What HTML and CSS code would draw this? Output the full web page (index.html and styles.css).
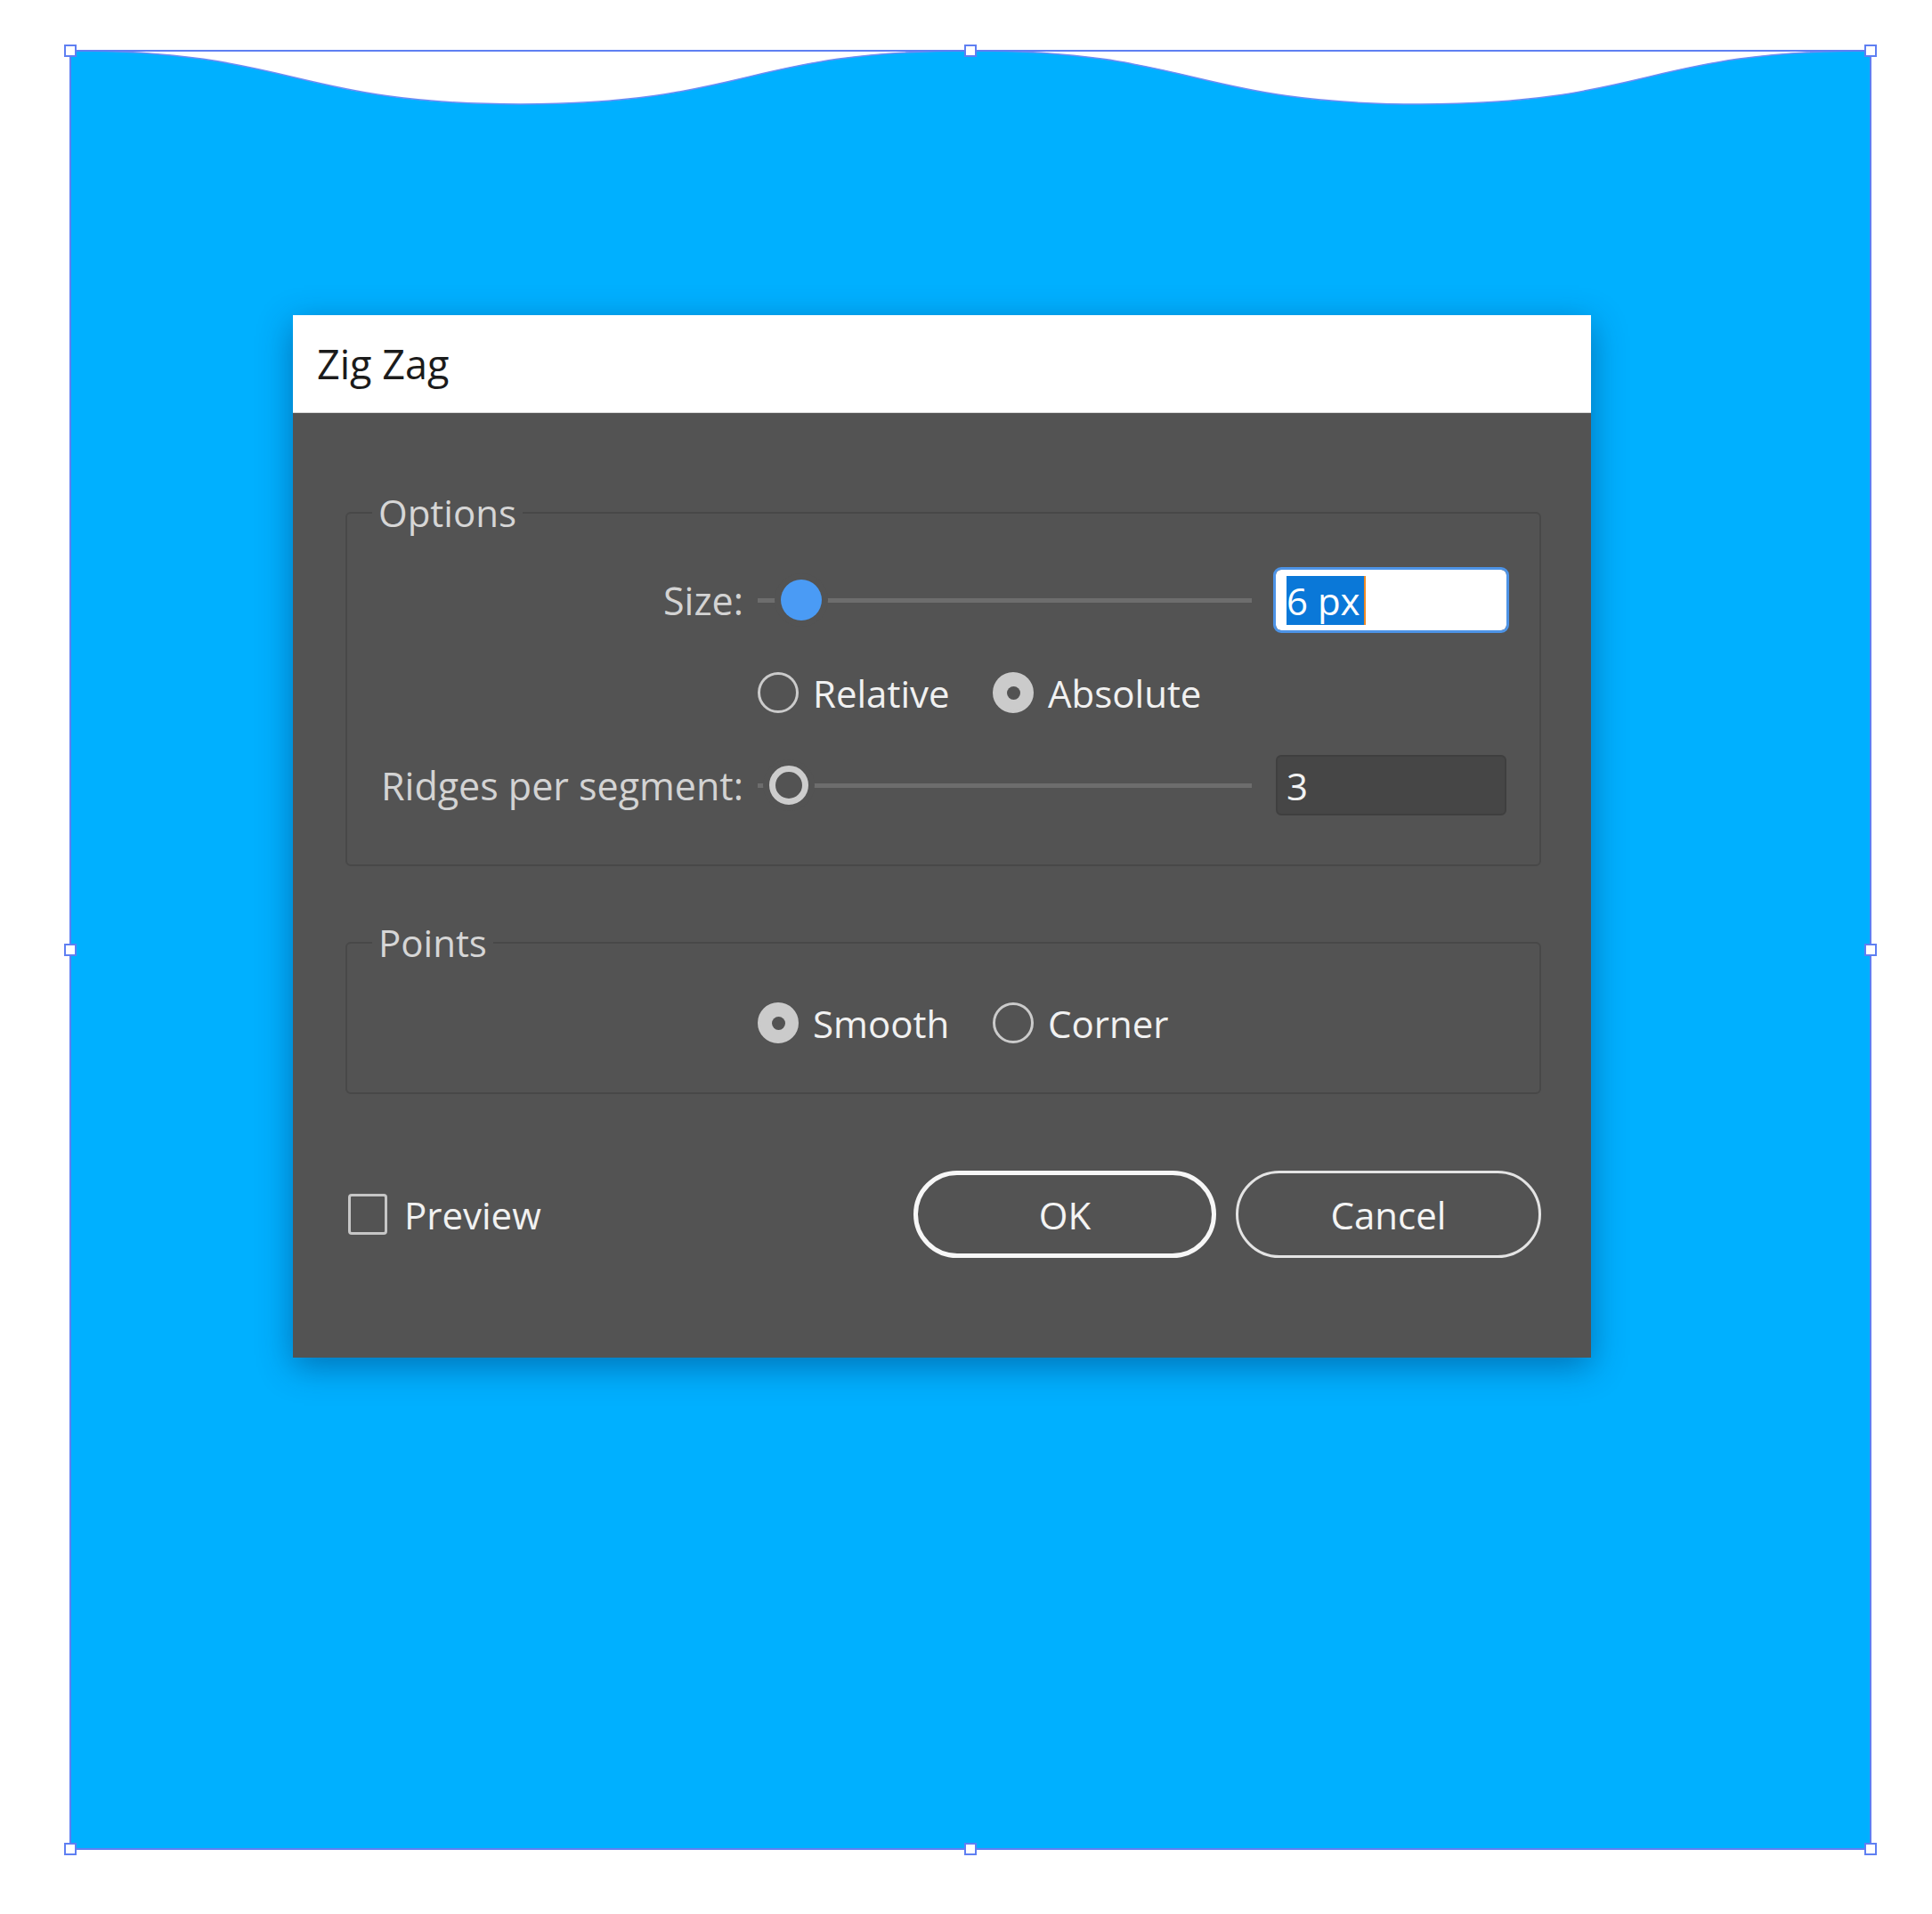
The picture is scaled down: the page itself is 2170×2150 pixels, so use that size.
FILE: index.html
```html
<!DOCTYPE html>
<html lang="en">
<head>
<meta charset="utf-8">
<title>Zig Zag</title>
<link rel="stylesheet" href="styles.css">
</head>
<body>
<div class="stage">
  <svg class="art" width="2170" height="2150" viewBox="0 0 2170 2150" xmlns="http://www.w3.org/2000/svg">
    <path class="shape" d="M79 57 C331 57 331 117 584.5 117 C838 117 838 57 1090 57 C1342 57 1342 117 1595.5 117 C1849 117 1849 57 2101 57 L2101 2077 L79 2077 Z"/>
    <rect class="bbox" x="79" y="57" width="2022" height="2020"/>
    <rect class="handle" x="73" y="51" width="12" height="12"/>
    <rect class="handle" x="1084" y="51" width="12" height="12"/>
    <rect class="handle" x="2095" y="51" width="12" height="12"/>
    <rect class="handle" x="73" y="1061" width="12" height="12"/>
    <rect class="handle" x="2095" y="1061" width="12" height="12"/>
    <rect class="handle" x="73" y="2071" width="12" height="12"/>
    <rect class="handle" x="1084" y="2071" width="12" height="12"/>
    <rect class="handle" x="2095" y="2071" width="12" height="12"/>
  </svg>

  <section class="dialog">
    <header class="titlebar">Zig Zag</header>
    <div class="dialog-body">
      <fieldset class="group group-options">
        <legend class="group-title">Options</legend>
        <div class="row row-first">
          <label class="row-label">Size:</label>
          <div class="slider"><span class="thumb thumb-active thumb-size"></span></div>
          <div class="field field-focus"><span class="selection">6 px</span></div>
        </div>
        <div class="row">
          <span class="row-label"></span>
          <div class="radios">
            <span class="radio"><span class="radio-dot"></span><span class="radio-text">Relative</span></span>
            <span class="radio"><span class="radio-dot is-checked"></span><span class="radio-text">Absolute</span></span>
          </div>
        </div>
        <div class="row">
          <label class="row-label">Ridges per segment:</label>
          <div class="slider"><span class="thumb thumb-ring thumb-ridges"></span></div>
          <div class="field field-dark"><span class="value">3</span></div>
        </div>
      </fieldset>

      <fieldset class="group group-points">
        <legend class="group-title">Points</legend>
        <div class="row row-points">
          <span class="row-label"></span>
          <div class="radios">
            <span class="radio"><span class="radio-dot is-checked"></span><span class="radio-text">Smooth</span></span>
            <span class="radio"><span class="radio-dot"></span><span class="radio-text">Corner</span></span>
          </div>
        </div>
      </fieldset>

      <div class="footer">
        <label class="check"><span class="check-box"></span><span class="check-text">Preview</span></label>
        <div class="buttons">
          <button class="btn btn-primary" type="button">OK</button>
          <button class="btn" type="button">Cancel</button>
        </div>
      </div>
    </div>
  </section>
</div>
</body>
</html>
```
FILE: styles.css
```css
* { box-sizing: border-box; }

html, body {
  margin: 0;
  padding: 0;
  background: #ffffff;
}

body {
  font-family: "Open Sans", "Noto Sans", "Liberation Sans", sans-serif;
}

.stage {
  position: relative;
  width: 2170px;
  height: 2150px;
  overflow: hidden;
}

.art {
  display: block;
}

.shape {
  fill: #00b0ff;
  stroke: #6d8cf4;
  stroke-width: 1.5;
}

.bbox {
  fill: none;
  stroke: #5f7ff2;
  stroke-width: 2;
}

.handle {
  fill: #ffffff;
  stroke: #5f7ff2;
  stroke-width: 2;
}

/* dialog */
.dialog {
  position: absolute;
  left: 329px;
  top: 354px;
  width: 1458px;
  height: 1171px;
  background: #535353;
  box-shadow: 0 10px 36px rgba(0, 40, 90, 0.45);
  display: flex;
  flex-direction: column;
}

.titlebar {
  height: 110px;
  flex: none;
  background: #ffffff;
  color: #1b1b1b;
  font-size: 45px;
  display: flex;
  align-items: center;
  padding-left: 27px;
  border-bottom: 1px solid #d8d8d8;
}

.dialog-body {
  flex: 1;
  padding: 86px 56px 0 59px;
  font-size: 42px;
}

.group {
  margin: 0;
  padding: 0 0 53px 0;
  min-width: 0;
  border: 2px solid #484848;
  border-radius: 6px;
}

.group-points {
  margin-top: 60px;
  padding-bottom: 42px;
}

.group-title {
  margin-left: 28px;
  padding: 0 7px;
  font-size: 42px;
  line-height: 52px;
  color: #d6d6d6;
}

.row {
  display: grid;
  grid-template-columns: 461px 582px 259px;
  align-items: center;
  height: 72px;
  margin-top: 32px;
}

.row-first {
  margin-top: 36px;
}

.row-points {
  margin-top: 28px;
}

.row-label {
  text-align: right;
  padding-right: 16px;
  color: #d3d3d3;
  font-size: 43px;
  white-space: nowrap;
}

/* slider */
.slider {
  position: relative;
  width: 555px;
  height: 48px;
}

.slider::before {
  content: "";
  position: absolute;
  left: 0;
  right: 0;
  top: 22px;
  height: 5px;
  background: #6d6d6d;
}

.thumb {
  position: absolute;
  top: 50%;
  transform: translateY(-50%);
  border-radius: 50%;
  box-shadow: 0 0 0 7px #535353;
}

.thumb-active {
  width: 46px;
  height: 46px;
  background: #4a9bf5;
}

.thumb-size { left: 26px; }

.thumb-ring {
  width: 44px;
  height: 44px;
  background: #535353;
  border: 7px solid #cdcdcd;
}

.thumb-ridges { left: 13px; }

/* fields */
.field {
  width: 259px;
  height: 68px;
  border-radius: 6px;
  display: flex;
  align-items: center;
}

.field-focus {
  background: #ffffff;
  outline: 3px solid #4d93e6;
  padding-left: 12px;
}

.selection {
  display: inline-block;
  background: #0a78d8;
  color: #ffffff;
  line-height: 55px;
  padding-right: 4px;
  border-right: 2px solid #f08a24;
}

.field-dark {
  background: #464646;
  border: 2px solid #3f3f3f;
  padding-left: 10px;
  color: #f2f2f2;
}

/* radios */
.radios {
  grid-column: 2 / 4;
  display: flex;
  align-items: center;
}

.radio {
  display: inline-flex;
  align-items: center;
  gap: 16px;
  color: #f1f1f1;
}

.radio:first-child {
  width: 264px;
}

.radio-dot {
  position: relative;
  width: 46px;
  height: 46px;
  border-radius: 50%;
  border: 3px solid #cbcbcb;
  flex: none;
}

.radio-dot.is-checked {
  background: #cbcbcb;
}

.radio-dot.is-checked::after {
  content: "";
  position: absolute;
  left: 50%;
  top: 50%;
  width: 15px;
  height: 15px;
  margin: -7.5px 0 0 -7.5px;
  border-radius: 50%;
  background: #535353;
}

/* footer */
.footer {
  margin-top: 86px;
  height: 98px;
  display: flex;
  align-items: center;
  justify-content: space-between;
}

.check {
  display: inline-flex;
  align-items: center;
  gap: 19px;
  margin-left: 3px;
  color: #f1f1f1;
}

.check-box {
  width: 44px;
  height: 46px;
  border: 3px solid #c6c6c6;
  border-radius: 4px;
}

.buttons {
  display: flex;
  gap: 22px;
}

.btn {
  width: 343px;
  height: 98px;
  border-radius: 49px;
  border: 3px solid #e4e4e4;
  background: transparent;
  color: #f4f4f4;
  font-family: inherit;
  font-size: 42px;
  padding: 0;
}

.btn-primary {
  width: 340px;
  border: 5px solid #f7f7f7;
}
```
